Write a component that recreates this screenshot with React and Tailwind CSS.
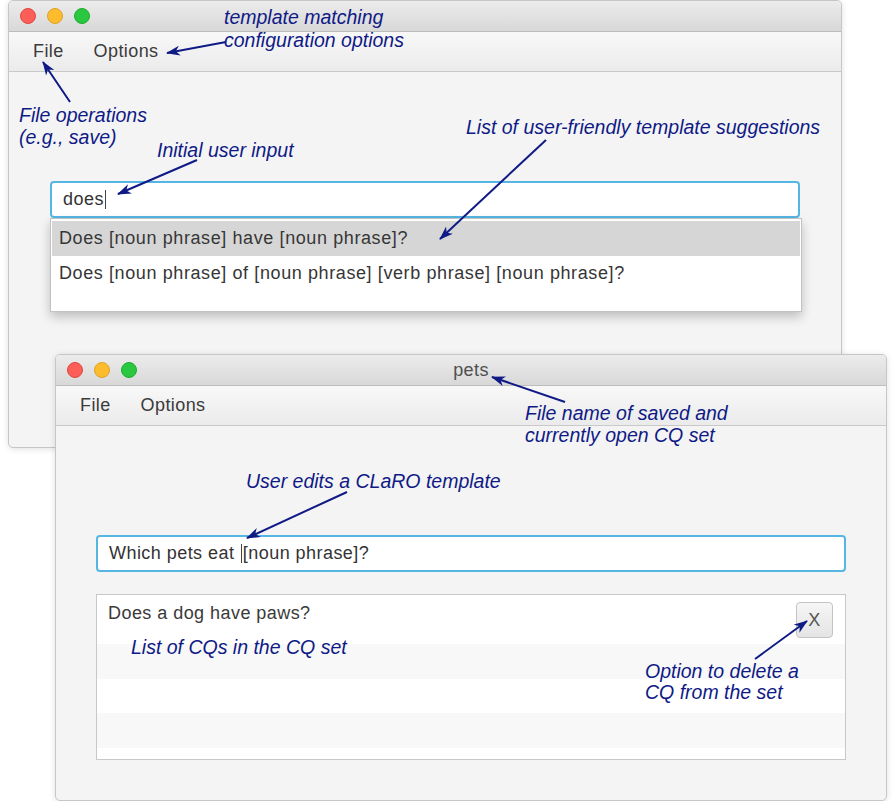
import React from 'react';

const uiFont = { fontFamily: '"Liberation Sans", Arial, sans-serif' };

// traffic light buttons in the title bar
const Lights = () => (
  <div className="flex items-center gap-[11px]">
    <span className="h-[16px] w-[16px] rounded-full border border-[#e2463f] bg-[#fc5f57]" />
    <span className="h-[16px] w-[16px] rounded-full border border-[#dea226] bg-[#fdbc2e]" />
    <span className="h-[16px] w-[16px] rounded-full border border-[#1dad2b] bg-[#29c840]" />
  </div>
);

const MacWindow = ({ className, title, children }) => (
  <div
    className={`absolute flex flex-col overflow-hidden rounded-[5px] border border-[#c6c6c6] bg-[#f4f4f4] shadow-[0_1px_6px_rgba(0,0,0,0.12)] ${className}`}
    style={uiFont}
  >
    <div className="relative flex h-[31px] shrink-0 items-center border-b border-[#bcbcbc] bg-gradient-to-b from-[#ececec] to-[#d8d8d8] px-[11px]">
      <Lights />
      {title && (
        <span className="absolute inset-x-0 text-center text-[18px] tracking-[0.4px] text-[#4f4f4f]">
          {title}
        </span>
      )}
    </div>
    <div className="flex h-[40px] shrink-0 items-center gap-[30px] border-b border-[#c9c9c9] bg-gradient-to-b from-[#f8f8f8] to-[#ebebeb] pl-[24px] text-[18px] tracking-[0.4px] text-[#3a3a3a]">
      <span>File</span>
      <span>Options</span>
    </div>
    {children}
  </div>
);

const Caret = () => <span className="mx-px inline-block h-[19px] w-px bg-[#444] align-middle" />;

const Note = ({ className, children }) => (
  <div
    className={`absolute whitespace-nowrap text-[19.5px] italic text-[#0f1a86] ${className}`}
    style={{ fontFamily: '"Liberation Sans", Arial, sans-serif' }}
  >
    {children}
  </div>
);

const arrows = [
  [226, 42, 167, 53],
  [70, 102, 43, 62],
  [197, 160, 118, 194],
  [546, 140, 440, 239],
  [565, 402, 492, 377],
  [347, 492, 247, 538],
  [755, 659, 807, 621],
];

export default function App() {
  return (
    <div className="relative h-[801px] w-[895px] overflow-hidden bg-white">
      {/* first window: template suggestions */}
      <MacWindow className="left-[8px] top-0 h-[448px] w-[834px]">
        <div className="px-[41px] pt-[109px]">
          <div className="relative">
            <div className="flex h-[37px] items-center rounded-[4px] border-2 border-[#55b6e4] bg-white pl-[11px] text-[18px] tracking-[0.45px] text-[#333]">
              does
              <Caret />
            </div>
            <div className="absolute left-0 top-full w-[752px] border border-[#c2c2c2] bg-white pt-[2px] text-[18px] tracking-[0.6px] text-[#363636] shadow-[0_5px_10px_rgba(0,0,0,0.22)]">
              <div className="mx-px flex h-[35px] items-center bg-[#d6d6d6] pl-[7px]">
                Does [noun phrase] have [noun phrase]?
              </div>
              <div className="flex h-[35px] items-center pl-[8px]">
                Does [noun phrase] of [noun phrase] [verb phrase] [noun phrase]?
              </div>
              <div className="h-[20px]" />
            </div>
          </div>
        </div>
      </MacWindow>

      {/* second window: CQ set editor */}
      <MacWindow className="left-[55px] top-[354px] h-[447px] w-[832px]" title="pets">
        <div className="px-[40px] pt-[109px]">
          <div className="flex h-[37px] items-center rounded-[4px] border-2 border-[#55b6e4] bg-white pl-[11px] text-[18px] tracking-[0.45px] text-[#333]">
            Which pets eat&nbsp;
            <Caret />
            [noun phrase]?
          </div>
          <div className="mt-[22px] flex h-[166px] flex-col overflow-hidden border border-[#c8c8c8] bg-white text-[18px] tracking-[0.45px] text-[#3a3a3a]">
            <div className="flex h-[49px] shrink-0 items-start justify-between pl-[11px] pr-[12px] pt-[7px]">
              <span className="leading-[22px]">Does a dog have paws?</span>
              <button className="flex h-[36px] w-[37px] items-center justify-center rounded-[4px] border border-[#c4c4c4] bg-gradient-to-b from-[#f6f6f6] to-[#e4e4e4] text-[18px] text-[#555]">
                X
              </button>
            </div>
            <div className="h-[35px] shrink-0 bg-[#f8f8f8]" />
            <div className="h-[34px] shrink-0 bg-white" />
            <div className="h-[35px] shrink-0 bg-[#f8f8f8]" />
            <div className="flex-1 bg-white" />
          </div>
        </div>
      </MacWindow>

      {/* annotations */}
      <Note className="left-[224px] top-[6px] leading-[23px]">
        template matching
        <br />
        configuration options
      </Note>
      <Note className="left-[19px] top-[104px] leading-[22px]">
        File operations
        <br />
        (e.g., save)
      </Note>
      <Note className="left-[157px] top-[139px] leading-[22px]">Initial user input</Note>
      <Note className="left-[466px] top-[116px] leading-[22px]">List of user-friendly template suggestions</Note>
      <Note className="left-[525px] top-[402px] leading-[22px]">
        File name of saved and
        <br />
        currently open CQ set
      </Note>
      <Note className="left-[246px] top-[470px] leading-[22px]">User edits a CLaRO template</Note>
      <Note className="left-[131px] top-[636px] leading-[22px]">List of CQs in the CQ set</Note>
      <Note className="left-[645px] top-[661px] leading-[21px]">
        Option to delete a
        <br />
        CQ from the set
      </Note>

      <svg className="pointer-events-none absolute inset-0" width="895" height="801">
        <defs>
          <marker
            id="head"
            viewBox="0 0 14 10"
            refX="13"
            refY="5"
            markerWidth="14"
            markerHeight="10"
            markerUnits="userSpaceOnUse"
            orient="auto"
          >
            <path d="M0,0 L14,5 L0,10 L4,5 z" fill="#0f1a86" />
          </marker>
        </defs>
        {arrows.map(([x1, y1, x2, y2], i) => (
          <line
            key={i}
            x1={x1}
            y1={y1}
            x2={x2}
            y2={y2}
            stroke="#0f1a86"
            strokeWidth="2"
            markerEnd="url(#head)"
          />
        ))}
      </svg>
    </div>
  );
}
